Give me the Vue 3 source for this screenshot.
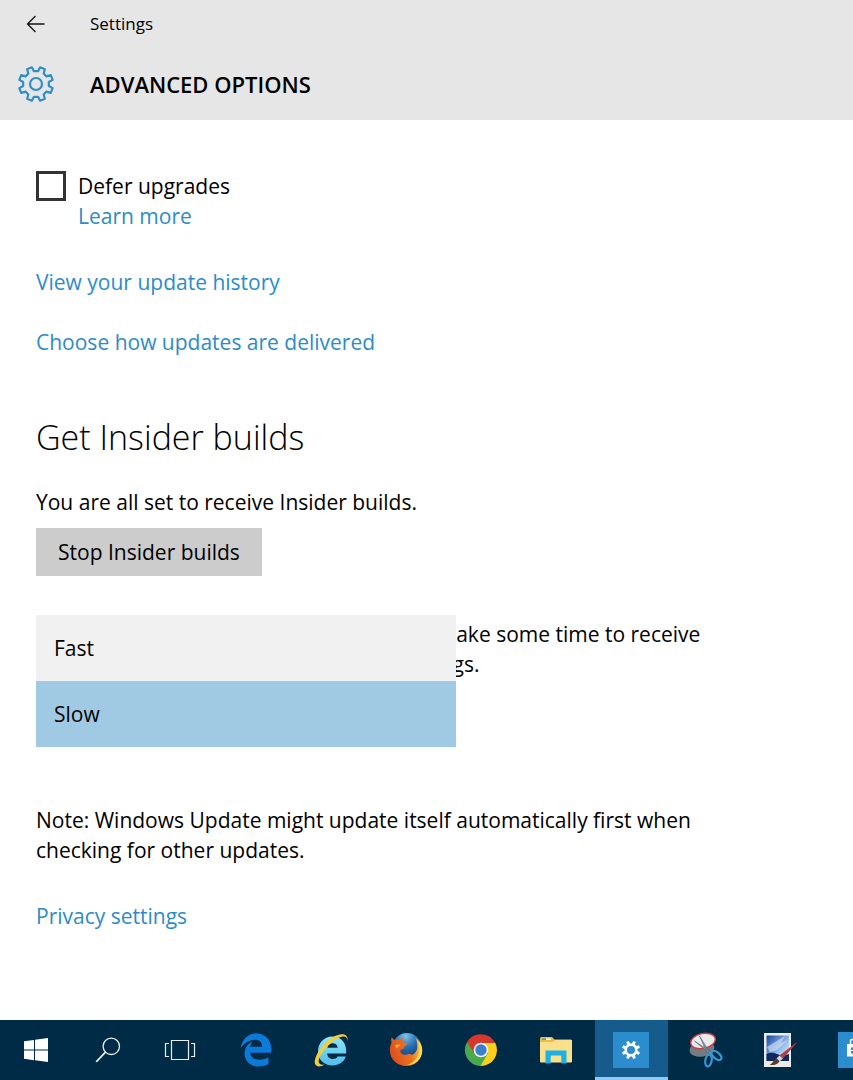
<template>
  <div class="settings">
    <header class="header">
      <div class="title-bar">
        <button class="back" type="button" aria-label="Back">
          <svg viewBox="0 0 20 18" width="20" height="18">
            <path d="M1.5 9H18.5M9.5 1L1.5 9L9.5 17" fill="none" stroke="#111" stroke-width="1.3" />
          </svg>
        </button>
        <span class="app-name">Settings</span>
      </div>
      <div class="page-title">
        <svg class="gear" viewBox="-20 -20 40 40" width="40" height="40">
          <path :d="gearPath(17.2, 13)" fill="none" stroke="#2e8fcb" stroke-width="2.2" stroke-linejoin="round" />
          <circle r="6" fill="none" stroke="#2e8fcb" stroke-width="2.2" />
        </svg>
        <h1>ADVANCED OPTIONS</h1>
      </div>
    </header>

    <main class="content">
      <div class="defer">
        <input id="defer" v-model="deferUpgrades" type="checkbox" />
        <div class="defer-text">
          <label for="defer">Defer upgrades</label>
          <a href="#">Learn more</a>
        </div>
      </div>

      <a class="history" href="#">View your update history</a>
      <a class="delivery" href="#">Choose how updates are delivered</a>

      <h2>Get Insider builds</h2>
      <p>You are all set to receive Insider builds.</p>
      <button class="stop" type="button">Stop Insider builds</button>

      <div class="level">
        <p id="level-text">
          Once you change how builds ship it might take some time to receive<br />
          Insider builds that match your saved settings.
        </p>
        <select v-model="level" size="2" aria-labelledby="level-text">
          <option v-for="name in LEVELS" :key="name" :value="name">{{ name }}</option>
        </select>
      </div>

      <p class="note">
        Note: Windows Update might update itself automatically first when checking for other updates.
      </p>
      <a class="privacy" href="#">Privacy settings</a>
    </main>

    <nav class="taskbar">
      <div class="system">
        <button type="button" aria-label="Start">
          <svg viewBox="0 0 24 24" width="24" height="24" fill="#fff">
            <path d="M0 3.3L10 1.9V11.4H0zM11 1.7L24 0V11.4H11zM0 12.4H10V22.2L0 20.8zM11 12.4H24V24L11 22.3z" />
          </svg>
        </button>
        <button type="button" aria-label="Search">
          <svg viewBox="0 0 26 26" width="26" height="26" fill="none" stroke="#e8eef2">
            <circle cx="16.3" cy="9.3" r="8.2" stroke-width="1.3" />
            <path d="M10.5 15.2L1.2 24.8" stroke-width="1.7" />
          </svg>
        </button>
        <button type="button" aria-label="Task View">
          <svg viewBox="0 0 32 22" width="32" height="22" fill="none" stroke="#e8eef2" stroke-width="1.2">
            <path d="M7.5 1.5H24.5V20.5H7.5zM5 4.5H1.5V17.5H5M27 4.5H30.5V17.5H27" />
          </svg>
        </button>
      </div>

      <div class="apps">
        <button type="button" aria-label="Edge">
          <svg viewBox="0 0 512 512" width="34" height="34">
            <path
              fill="#0b7ad8"
              d="M486.3 243.7c0-44-7.8-84.5-28.8-122.4C416.5 47.9 343.9 8 258.9 8 119 7.7 40.6 113.2 26 227.7c42.5-61.3 117.1-121.4 220.4-125 0 0 109.7 0 99.4 105H170c6.4-37.4 18.6-59 34.3-79-75 34.9-121.8 96.1-120.7 188.3.8 71.5 50.1 144.9 120.7 172 83.4 31.9 192.8 7.2 240.2-21.3V363.3c-80.9 56.5-270.9 60.9-272.3-67.6h314.1z"
            />
          </svg>
        </button>

        <button type="button" aria-label="Internet Explorer">
          <svg viewBox="0 0 36 36" width="36" height="36">
            <defs>
              <linearGradient id="ie" x1="0" y1="0" x2="0" y2="1">
                <stop offset="0" stop-color="#8fe4fb" />
                <stop offset="1" stop-color="#4fbdeb" />
              </linearGradient>
            </defs>
            <path
              fill="url(#ie)"
              fill-rule="evenodd"
              d="M19.5 4.5C10.5 4.5 5 11.5 5 19.5C5 28 11.5 33.5 19.5 33.5C26 33.5 31 30 32.8 24.5H24.6C23.5 26.3 22 27 19.8 27C16.5 27 14.3 24.9 14.2 21.5H33.2C34 11.5 28.5 4.5 19.5 4.5zM14.4 15.8C14.9 13 17 11.3 19.7 11.3C22.5 11.3 24.5 13 24.7 15.8z"
            />
            <path
              fill="#f3cf35"
              d="M34.5 9.2C35.4 2 30 .6 22.5 3.8C12.5 8.2 3.3 20.5 1.8 28.5C.9 34.5 5.8 36.3 11.5 32.5C7.5 33.5 4.8 32 5.9 27.5C7.7 20.5 16 10.7 24.5 6.4C31 3.1 34.4 4.2 34.5 9.2z"
            />
          </svg>
        </button>

        <button type="button" aria-label="Firefox">
          <svg viewBox="0 0 36 36" width="36" height="36">
            <defs>
              <linearGradient id="fox" x1="0" y1=".5" x2="1" y2=".2">
                <stop offset="0" stop-color="#dc4d1c" />
                <stop offset=".55" stop-color="#ee7420" />
                <stop offset="1" stop-color="#fbd34b" />
              </linearGradient>
              <radialGradient id="globe" cx=".45" cy=".1" r=".8">
                <stop offset="0" stop-color="#7cc4e8" />
                <stop offset=".5" stop-color="#286fb0" />
                <stop offset="1" stop-color="#123a78" />
              </radialGradient>
            </defs>
            <circle cx="19" cy="15.5" r="14.5" fill="url(#globe)" />
            <path
              fill="url(#fox)"
              d="M3.5 5.5C4.5 6 5.5 7 6.2 8C8 7.3 10 7.6 11.5 8.6C12.8 6.7 14 6 15.5 5.8C14.6 7.1 14.5 8.5 15 10C16.3 10.8 18 10.7 19.3 11.2C19.6 12.6 17.5 13.5 16 14.4C16.2 15.6 15.8 16.8 14.6 17C13.2 17.3 12 18 12.3 19.4C13 22.5 16.5 23.5 19 22.5C21 21.7 22.8 22 24 23C27 21.5 29 19 29.3 15.5C29.5 11.5 29 8.5 27.5 6C32 9 34.5 13.5 34.3 19C34 27.7 27 34 18.2 34C9.3 34 2.2 27.5 1.9 19C1.8 15.5 2.5 12.5 3.6 10.5C3 8.8 3 7 3.5 5.5z"
            />
            <path
              fill="#fbdc5a"
              d="M30.5 9.5C34.5 14 35 21 31.5 26.5C28.5 31 24 33 19.5 33C26.5 30.5 31 24.5 31.5 18C31.7 15 31.3 12 30.5 9.5z"
            />
            <path d="M7 13.5C9 11.8 11.5 12.3 13 13.5C11 13.5 10 15.5 8.5 16.5z" fill="#f6a04a" />
          </svg>
        </button>

        <button type="button" aria-label="Chrome">
          <svg viewBox="0 0 34 34" width="34" height="34">
            <path d="M17 17L3.1 9A16 16 0 0 0 17 33L24 21z" fill="#4aa84d" />
            <path d="M17 9.5H31.1A16 16 0 0 1 16.5 33L24 20z" fill="#fbd01d" />
            <path d="M10 20L3.1 9A16 16 0 0 1 31.1 9.8H17z" fill="#d9372c" />
            <circle cx="17" cy="17" r="7.3" fill="#f2f4f5" />
            <circle cx="17" cy="17" r="5.7" fill="#3b7fcd" />
          </svg>
        </button>

        <button type="button" aria-label="File Explorer">
          <svg viewBox="0 0 34 28" width="34" height="28">
            <path d="M1 2.5Q1 1 2.5 1H13L15.500 3.5H31.5Q33 3.5 33 5V25H1z" fill="#e9bd4d" />
            <path d="M3 2.5H7V4H3z" fill="#4da58a" />
            <path d="M7 2.5H12V4H7z" fill="#fff" />
            <path d="M1 6H14L16.5 4H33V25.5Q33 26.5 32 26.5H2Q1 26.5 1 25.5z" fill="#fbe08c" />
            <path
              fill="#1fb0e6"
              d="M6.500 14.5H27.5V27.5H22.3V20.5Q22.3 19.5 21.3 19.5H12.7Q11.7 19.5 11.7 20.5V27.5H6.5z"
            />
          </svg>
        </button>

        <button class="active" type="button" aria-label="Settings">
          <svg viewBox="-18 -18 36 36" width="36" height="36">
            <path d="M-18 -18H18V18H-18z" fill="#2b8dcd" />
            <path :d="gearPath(9.2, 6.6)" fill="#fff" />
            <circle r="4" fill="#2b8dcd" />
          </svg>
        </button>

        <button type="button" aria-label="Snipping Tool">
          <svg viewBox="0 0 36 36" width="36" height="36">
            <ellipse cx="14" cy="17" rx="12.5" ry="7.5" fill="#747b82" transform="rotate(-10 14 17)" />
            <ellipse
              cx="15"
              cy="9"
              rx="12.5"
              ry="7.5"
              fill="#e9ebed"
              stroke="#cf3b40"
              stroke-width="1.4"
              transform="rotate(-12 15 9)"
            />
            <path
              fill="#8b949c"
              stroke="#59636c"
              stroke-width=".6"
              d="M11.5 4L21.5 20L19.5 21.5zM6.5 9L24 20.5L22.5 22.5z"
            />
            <g fill="none" stroke="#3697d1" stroke-width="2.2">
              <ellipse cx="28.5" cy="23.5" rx="6" ry="3.2" transform="rotate(40 28.5 23.5)" />
              <ellipse cx="20.5" cy="28.5" rx="3.2" ry="6" transform="rotate(10 20.5 28.5)" />
            </g>
          </svg>
        </button>

        <button type="button" aria-label="Paint">
          <svg viewBox="0 0 36 36" width="36" height="36">
            <defs>
              <linearGradient id="sky" x1="0" y1="0" x2="1" y2="1">
                <stop offset="0" stop-color="#1544a0" />
                <stop offset=".6" stop-color="#9dc2ec" />
                <stop offset="1" stop-color="#edf4fb" />
              </linearGradient>
            </defs>
            <path d="M1 1H28V35H1z" fill="#eceae8" />
            <path d="M3.5 3.5H26V29H3.5z" fill="url(#sky)" />
            <path d="M4 15L22 4L18 11L25 8L14 18L7 20z" fill="#d9e8f8" opacity=".6" />
            <path d="M3.5 22Q9 19.5 14 22T26 22V29H3.5z" fill="#10285f" />
            <path d="M34.5 10L20 26.5L16.5 23.5L32 11.5z" fill="#b63b46" />
            <path d="M16.5 23.5L20 26.5L16.5 29.5L13.5 26.5z" fill="#d3d4d6" />
            <path d="M13.5 26.5L16.5 29.5C14 33 10 33.5 6.5 32.8C10 31.5 10 28 13.5 26.5z" fill="#54402e" />
          </svg>
        </button>

        <button type="button" aria-label="Store">
          <svg viewBox="0 0 36 36" width="36" height="36">
            <path d="M0 0H36V36H0z" fill="#2b8dcd" />
            <path d="M9 12H27V24.5H9z" fill="#fff" />
            <path d="M12.5 12V9Q12.5 7.5 14 7.5H22Q23.5 7.5 23.5 9V12" fill="none" stroke="#fff" stroke-width="1.5" />
            <path
              fill="#2b8dcd"
              d="M13 15.500L17 15V18H13zM18 14.8L23 14.2V18H18zM13 19H17V22L13 21.5zM18 19H23V22.8L18 22.2z"
            />
          </svg>
        </button>
      </div>
    </nav>
  </div>
</template>

<script setup>
import { ref } from 'vue'

const LEVELS = ['Fast', 'Slow']
const TEETH = 8

const deferUpgrades = ref(false)
const level = ref('Slow')

// Closed gear outline centred on 0,0. Teeth sit either side of each axis.
function gearPath(outer, inner) {
  const step = (Math.PI * 2) / TEETH
  const points = []
  for (let i = 0; i < TEETH; i++) {
    const mid = (i + 0.5) * step
    const corners = [
      [inner, -0.3],
      [outer, -0.19],
      [outer, 0.19],
      [inner, 0.3],
    ]
    for (const [radius, offset] of corners) {
      const angle = mid + offset * step
      points.push(`${(radius * Math.cos(angle)).toFixed(2)} ${(radius * Math.sin(angle)).toFixed(2)}`)
    }
  }
  return `M${points.join('L')}Z`
}
</script>

<style>
body {
  margin: 0;
  background: #fff;
}
</style>

<style scoped>
.settings {
  display: flex;
  flex-direction: column;
  min-height: 100vh;
  overflow: hidden;
  font-family: 'Open Sans', 'Noto Sans', sans-serif;
  font-size: 21px;
  line-height: 30px;
  color: #000;
}

button,
select {
  border: 0;
  border-radius: 0;
  font: inherit;
  color: inherit;
}

h1,
h2,
p {
  margin: 0;
}

a {
  color: #2b8cc8;
  text-decoration: none;
}

.header {
  background: #e6e6e6;
}

.title-bar {
  display: flex;
  align-items: center;
  height: 48px;
}

.back {
  display: grid;
  place-items: center;
  width: 72px;
  height: 48px;
  margin-right: 18px;
  padding: 0;
  background: none;
}

.app-name {
  font-size: 17px;
}

.page-title {
  display: flex;
  align-items: center;
  height: 72px;
  padding-left: 16px;
}

.gear {
  margin-right: 34px;
}

h1 {
  font-size: 22px;
  font-weight: 600;
}

.content {
  display: flex;
  flex: 1;
  flex-direction: column;
  align-items: flex-start;
  padding: 51px 36px 36px;
}

.defer {
  display: flex;
  gap: 12px;
}

.defer input {
  appearance: none;
  width: 30px;
  height: 30px;
  margin: 0;
  border: 3px solid #333;
  background: #fff;
}

.defer input:checked {
  background: #2b8cc8;
}

.defer-text {
  display: flex;
  flex-direction: column;
}

.history {
  margin-top: 36px;
}

.delivery {
  margin-top: 30px;
}

h2 {
  margin: 56px 0 26px;
  font-size: 34px;
  font-weight: 300;
  line-height: 48px;
}

.stop {
  height: 48px;
  margin-top: 11px;
  padding: 0 22px;
  background: #ccc;
}

/* The open list lies over the start of the text. */
.level {
  display: grid;
  margin-top: 39px;
}

.level p,
.level select {
  grid-area: 1 / 1;
}

.level p {
  padding-top: 4px;
  white-space: nowrap;
}

.level select {
  z-index: 1;
  width: 420px;
  height: 132px;
  padding: 0;
  overflow: hidden;
  outline: 0;
  background: #f1f1f1;
}

.level option {
  box-sizing: border-box;
  height: 66px;
  padding: 19px 18px;
  color: #000;
}

.level option:checked {
  background: linear-gradient(#a0cae3, #a0cae3);
  color: #000;
}

.note {
  max-width: 690px;
  margin-top: 58px;
}

.privacy {
  margin-top: 36px;
}

.taskbar {
  display: flex;
  height: 60px;
  background: #002b47;
}

.system,
.apps {
  display: flex;
  flex-shrink: 0;
}

.system {
  margin-right: 3px;
}

.taskbar button {
  display: grid;
  place-items: center;
  width: 72px;
  height: 60px;
  padding: 0;
  background: none;
}

.apps button {
  width: 73px;
  margin: 0 1px;
  padding-right: 1px;
}

.taskbar .apps button {
  width: 73px;
  padding-right: 1px;
}

.taskbar .active {
  background: #155b8b;
  box-shadow: inset 0 -3px #8fcaf2;
}
</style>
